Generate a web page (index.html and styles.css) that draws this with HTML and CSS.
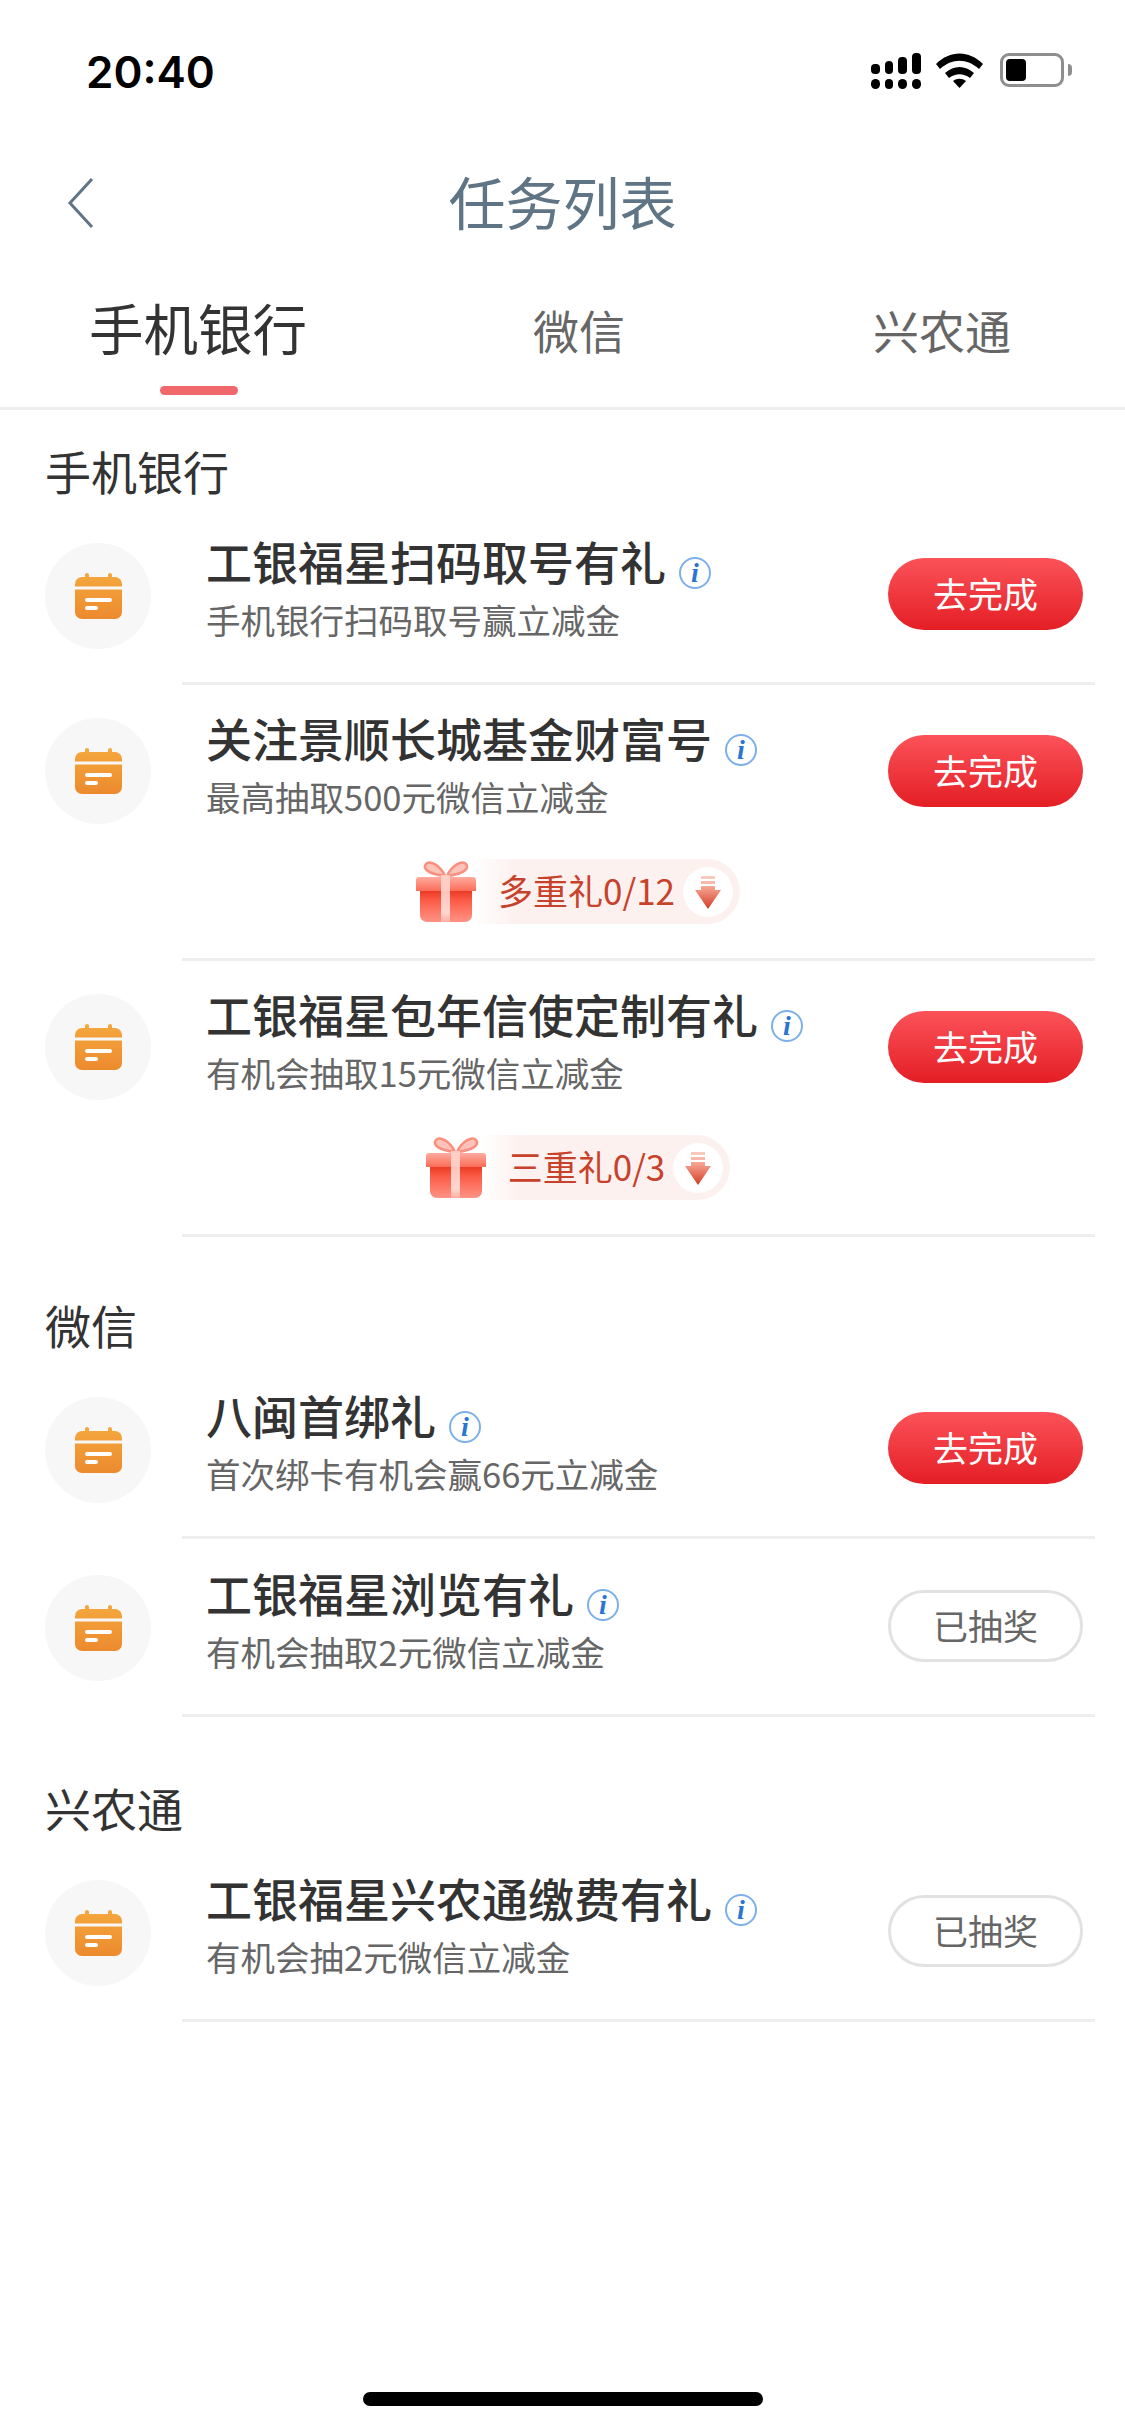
FILE: index.html
```html
<!DOCTYPE html>
<html lang="zh-CN">
<head>
  <meta charset="UTF-8">
  <meta name="viewport" content="width=device-width, initial-scale=1.0">
  <title>任务列表</title>
  <link rel="stylesheet" href="styles.css">
</head>
<body>
  <svg class="defs" width="0" height="0">
    <defs>
      <linearGradient id="calGrad" x1="0" y1="0" x2="0" y2="46" gradientUnits="userSpaceOnUse">
        <stop offset="0" stop-color="#f5a83e"/>
        <stop offset="1" stop-color="#ec8a2e"/>
      </linearGradient>
      <linearGradient id="boxGrad" x1="0" y1="0" x2="0" y2="1">
        <stop offset="0" stop-color="#e62f1a"/>
        <stop offset=".35" stop-color="#fb5a45"/>
        <stop offset="1" stop-color="#ff9385"/>
      </linearGradient>
      <linearGradient id="lidGrad" x1="0" y1="0" x2="0" y2="1">
        <stop offset="0" stop-color="#ffab9e"/>
        <stop offset="1" stop-color="#fb6d58"/>
      </linearGradient>
      <linearGradient id="ribbonGrad" x1="0" y1="0" x2="0" y2="1">
        <stop offset="0" stop-color="#ffd5cd"/>
        <stop offset=".8" stop-color="#ffe6e0"/>
        <stop offset="1" stop-color="#ffb3a7"/>
      </linearGradient>
      <linearGradient id="arrowGrad" x1="0" y1="0" x2="0" y2="1">
        <stop offset="0" stop-color="#f8a999"/>
        <stop offset="1" stop-color="#d43c22"/>
      </linearGradient>
      <symbol id="cal" viewBox="0 0 47 46">
        <path d="M10 2a2 2 0 0 1 4 0V4h19V2a2 2 0 0 1 4 0V4h3a7 7 0 0 1 7 7v2.500H0V11a7 7 0 0 1 7-7h3z" fill="url(#calGrad)"/>
        <path d="M0 16.500h47V39a7 7 0 0 1-7 7H7a7 7 0 0 1-7-7z" fill="url(#calGrad)"/>
        <rect x="10" y="25" width="27" height="4" rx="2" fill="#fff"/>
        <rect x="10" y="33" width="13" height="4" rx="2" fill="#fff"/>
      </symbol>
      <symbol id="gift" viewBox="0 0 62 62">
        <path d="M30 15C25 4 15-1 11 3c-4 5 3 10 19 12z" fill="#fdc3b9" stroke="#fa8f80" stroke-width="2.500"/>
        <path d="M32 15C37 4 47-1 51 3c4 5-3 10-19 12z" fill="#fdc3b9" stroke="#fa8f80" stroke-width="2.500"/>
        <path d="M5 27h52v27a7 7 0 0 1-7 7H12a7 7 0 0 1-7-7z" fill="url(#boxGrad)"/>
        <path d="M1 19a3 3 0 0 1 3-3h54a3 3 0 0 1 3 3v11H1z" fill="url(#lidGrad)"/>
        <rect x="26" y="14" width="9" height="47" fill="url(#ribbonGrad)" opacity=".85"/>
      </symbol>
      <symbol id="arrow" viewBox="0 0 26 34">
        <rect x="6" y="0" width="14" height="3" fill="#f9c9be"/>
        <rect x="6" y="5" width="14" height="3" fill="#f8b9ab"/>
        <path d="M6 10h14v4h6L13 33 0 14h6z" fill="url(#arrowGrad)"/>
      </symbol>
    </defs>
  </svg>

  <div class="phone">
    <div class="status">
      <span class="time">20:40</span>
      <div class="status-icons">
        <svg class="sig" width="50" height="36" viewBox="0 0 50 36">
          <g fill="#000">
            <rect x="0" y="11" width="9" height="10" rx="4"/>
            <rect x="14" y="8" width="8" height="13" rx="4"/>
            <rect x="27" y="4" width="9" height="17" rx="4"/>
            <rect x="41" y="0" width="9" height="21" rx="4"/>
            <rect x="0" y="26" width="9" height="10" rx="4.500"/>
            <rect x="14" y="26" width="8" height="10" rx="4"/>
            <rect x="27" y="26" width="9" height="10" rx="4.500"/>
            <rect x="41" y="26" width="9" height="10" rx="4.500"/>
          </g>
        </svg>
        <svg class="wifi" width="47" height="35" viewBox="0 0 47 35">
          <path d="M0 11C14-3 33-3 47 11l-4 5C31 5 16 5 4 16z" fill="#000"/>
          <path d="M9 20c9-8 20-8 29 0l-4 5c-7-5-14-5-21 0z" fill="#000"/>
          <path d="M17 28c4-3 9-3 13 0l-6.500 7z" fill="#000"/>
        </svg>
        <div class="battery"><span class="battery-level"></span></div>
        <span class="battery-nub"></span>
      </div>
    </div>

    <header class="nav">
      <svg class="back" width="28" height="52" viewBox="0 0 28 52">
        <path d="M25 2 3 26l22 24" fill="none" stroke="#5f7485" stroke-width="3"/>
      </svg>
      <h1>任务列表</h1>
    </header>

    <nav class="tabs">
      <div class="tab tab-active">手机银行<span class="tab-bar"></span></div>
      <div class="tab tab-wx">微信</div>
      <div class="tab tab-xn">兴农通</div>
    </nav>

    <section class="group group-first">
      <h2>手机银行</h2>
      <div class="task">
        <div class="task-main">
          <div class="cal-circle"><svg width="47" height="46"><use href="#cal"/></svg></div>
          <div class="task-body">
            <div class="task-title">工银福星扫码取号有礼<span class="info">i</span></div>
            <div class="task-sub">手机银行扫码取号赢立减金</div>
          </div>
          <a class="btn">去完成</a>
        </div>
      </div>
      <div class="task task-gift">
        <div class="task-main">
          <div class="cal-circle"><svg width="47" height="46"><use href="#cal"/></svg></div>
          <div class="task-body">
            <div class="task-title">关注景顺长城基金财富号<span class="info">i</span></div>
            <div class="task-sub">最高抽取500元微信立减金</div>
          </div>
          <a class="btn">去完成</a>
        </div>
        <div class="gift-row">
          <svg class="gift" width="62" height="62"><use href="#gift"/></svg>
          <div class="gift-pill">
            <span class="gift-text">多重礼0/12</span>
            <i class="gift-arrow"><svg width="26" height="34"><use href="#arrow"/></svg></i>
          </div>
        </div>
      </div>
      <div class="task task-gift">
        <div class="task-main">
          <div class="cal-circle"><svg width="47" height="46"><use href="#cal"/></svg></div>
          <div class="task-body">
            <div class="task-title">工银福星包年信使定制有礼<span class="info">i</span></div>
            <div class="task-sub">有机会抽取15元微信立减金</div>
          </div>
          <a class="btn">去完成</a>
        </div>
        <div class="gift-row">
          <svg class="gift" width="62" height="62"><use href="#gift"/></svg>
          <div class="gift-pill">
            <span class="gift-text">三重礼0/3</span>
            <i class="gift-arrow"><svg width="26" height="34"><use href="#arrow"/></svg></i>
          </div>
        </div>
      </div>
    </section>

    <section class="group">
      <h2>微信</h2>
      <div class="task">
        <div class="task-main">
          <div class="cal-circle"><svg width="47" height="46"><use href="#cal"/></svg></div>
          <div class="task-body">
            <div class="task-title">八闽首绑礼<span class="info">i</span></div>
            <div class="task-sub">首次绑卡有机会赢66元立减金</div>
          </div>
          <a class="btn">去完成</a>
        </div>
      </div>
      <div class="task">
        <div class="task-main">
          <div class="cal-circle"><svg width="47" height="46"><use href="#cal"/></svg></div>
          <div class="task-body">
            <div class="task-title">工银福星浏览有礼<span class="info">i</span></div>
            <div class="task-sub">有机会抽取2元微信立减金</div>
          </div>
          <a class="btn btn-done">已抽奖</a>
        </div>
      </div>
    </section>

    <section class="group group-last">
      <h2>兴农通</h2>
      <div class="task">
        <div class="task-main">
          <div class="cal-circle"><svg width="47" height="46"><use href="#cal"/></svg></div>
          <div class="task-body">
            <div class="task-title">工银福星兴农通缴费有礼<span class="info">i</span></div>
            <div class="task-sub">有机会抽2元微信立减金</div>
          </div>
          <a class="btn btn-done">已抽奖</a>
        </div>
      </div>
    </section>

    <div class="home-bar"></div>
  </div>
</body>
</html>
```

FILE: styles.css
```css
* {
  box-sizing: border-box;
}

html, body {
  margin: 0;
  padding: 0;
  background-color: #fff;
}

body {
  font-family: "Noto Sans CJK SC", "Noto Sans", sans-serif;
  color: #333;
}

.defs {
  position: absolute;
}

.phone {
  position: relative;
  width: 1125px;
  height: 2435px;
  overflow: hidden;
}

.status {
  height: 144px;
  padding: 53px 53px 0 86px;
  display: flex;
  justify-content: space-between;
}

.time {
  font-family: Inter, sans-serif;
  font-weight: 600;
  font-size: 44px;
  line-height: 38px;
  color: #000;
}

.status-icons {
  display: flex;
  align-items: flex-start;
  height: 36px;
}

.wifi {
  margin-left: 15px;
}

.battery {
  margin-left: 17px;
  width: 64px;
  height: 34px;
  border: 3px solid #8e8e8e;
  border-radius: 9px;
  padding: 3px;
}

.battery-level {
  display: block;
  width: 20px;
  height: 22px;
  background-color: #000;
  border-radius: 4px;
}

.battery-nub {
  margin: 11px 0 0 4px;
  width: 4px;
  height: 12px;
  background-color: #8e8e8e;
  border-radius: 0 4px 4px 0;
}

.nav {
  height: 118px;
  padding-bottom: 6px;
  position: relative;
  display: flex;
  justify-content: center;
  align-items: center;
}

.back {
  position: absolute;
  left: 67px;
  top: 33px;
}

.nav h1 {
  margin: 0;
  font-size: 57px;
  font-weight: 400;
  color: #5f7485;
  line-height: 80px;
}

.tabs {
  height: 148px;
  border-bottom: 3px solid #eee;
  position: relative;
  display: flex;
  align-items: flex-start;
  padding-top: 23px;
}

.tab {
  font-size: 46px;
  line-height: 84px;
  color: #666;
}

.tab-active {
  position: relative;
  margin-left: 89px;
  font-size: 54.500px;
  color: #333;
}

.tab-wx {
  margin: 2px 0 0 226px;
}

.tab-xn {
  margin: 2px 0 0 248px;
}

.tab-bar {
  position: absolute;
  left: 71px;
  top: 101px;
  width: 78px;
  height: 9px;
  border-radius: 5px;
  background-color: #f0686c;
}

.group {
  margin-top: 55px;
}

.group-first {
  margin-top: 28px;
}

.group-last {
  margin-top: 58px;
}

.group h2 {
  margin: 0;
  padding: 0 0 5px 45px;
  font-size: 46px;
  font-weight: 400;
  line-height: 64px;
  color: #333;
}

.task::after {
  content: "";
  display: block;
  margin: 0 30px 0 182px;
  height: 3px;
  background-color: #eee;
}

.task-main {
  height: 175px;
  padding: 2px 42px 0 45px;
  display: flex;
  align-items: center;
}

.task-gift .task-main {
  margin-top: -3px;
}

.cal-circle {
  width: 106px;
  height: 106px;
  border-radius: 50%;
  background-color: #f7f7f7;
  display: flex;
  justify-content: center;
  align-items: center;
  flex-shrink: 0;
}

.cal-circle svg {
  display: block;
}

.task-body {
  flex: 1;
  margin-left: 55px;
  padding-bottom: 14px;
}

.task-gift .task-body {
  padding-bottom: 10px;
}

.task-title {
  display: flex;
  font-size: 46px;
  font-weight: 500;
  line-height: 60px;
  color: #333;
}

.task-sub {
  font-size: 34.500px;
  line-height: 58px;
  color: #666;
}

.info {
  align-self: flex-end;
  margin: 0 0 1px 13px;
  width: 32px;
  height: 32px;
  border: 2px solid #7db0ea;
  border-radius: 50%;
  font-family: "Liberation Serif", serif;
  font-style: italic;
  font-weight: 700;
  font-size: 28px;
  line-height: 28px;
  text-align: center;
  color: #2b74d2;
}

.btn {
  width: 195px;
  height: 72px;
  margin-top: -3px;
  border-radius: 36px;
  background: linear-gradient(180deg, #fc5259, #e41e25);
  color: #fff;
  font-size: 35px;
  line-height: 70px;
  text-align: center;
}

.task-gift .btn {
  margin-top: 1px;
}

.btn-done {
  background: #fff;
  border: 3px solid #e2e2e2;
  color: #666;
  line-height: 64px;
}

.gift-row {
  height: 65px;
  margin: 2px 0 34px;
  padding-left: 30px;
  display: flex;
  justify-content: center;
  align-items: center;
}

.gift {
  position: relative;
  z-index: 1;
  flex-shrink: 0;
}

.gift-pill {
  height: 65px;
  margin-left: -6px;
  padding: 0 7px 0 27px;
  border-radius: 0 33px 33px 0;
  background: linear-gradient(90deg, #fff, #fdf1f0 16%);
  display: flex;
  align-items: center;
  font-size: 35px;
  color: #c8412a;
}

.gift-text {
  padding-bottom: 4px;
}

.gift-arrow {
  margin-left: 8px;
  width: 50px;
  height: 50px;
  border-radius: 50%;
  background-color: #fff;
  display: flex;
  justify-content: center;
  align-items: center;
  padding-top: 3px;
}

.home-bar {
  position: absolute;
  left: 363px;
  bottom: 29px;
  width: 400px;
  height: 14px;
  border-radius: 7px;
  background-color: #000;
}
```
